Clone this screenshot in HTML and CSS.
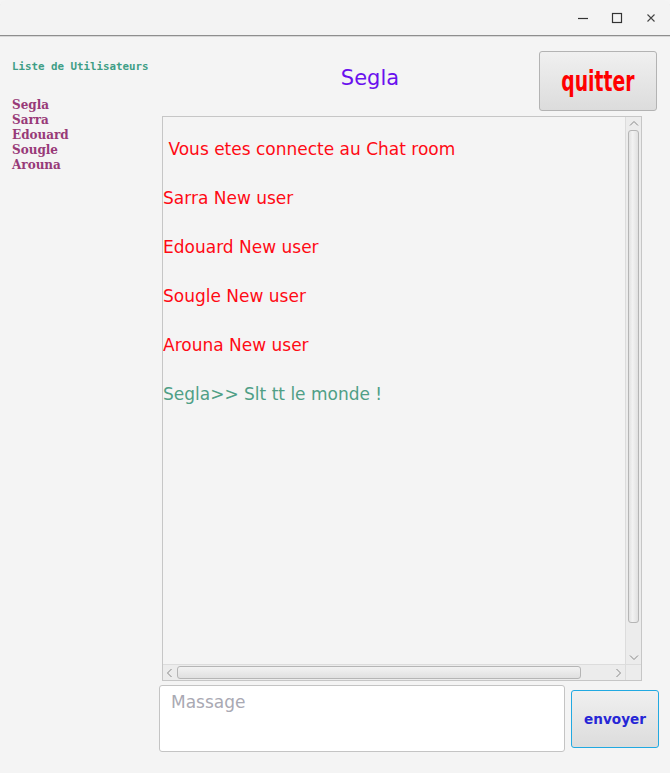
FILE: index.html
```html
<!DOCTYPE html>
<html lang="fr">
<head>
<meta charset="utf-8">
<title>Chat</title>
<link rel="stylesheet" href="styles.css">
</head>
<body>
<div class="window">
  <div class="titlebar">
    <div class="controls">
      <svg class="ctl" width="12" height="12" viewBox="0 0 12 12"><path d="M1 6.5h10" stroke="#333" stroke-width="1.2"/></svg>
      <svg class="ctl" width="12" height="12" viewBox="0 0 12 12"><rect x="1.5" y="1.5" width="9" height="9" fill="none" stroke="#333" stroke-width="1.2"/></svg>
      <svg class="ctl" width="12" height="12" viewBox="0 0 12 12"><path d="M2.5 2.5l7 7M9.5 2.5l-7 7" stroke="#444" stroke-width="1.1"/></svg>
    </div>
  </div>
  <div class="main">
    <aside class="sidebar">
      <div class="list-title">Liste de Utilisateurs</div>
      <ul class="users">
        <li>Segla</li>
        <li>Sarra</li>
        <li>Edouard</li>
        <li>Sougle</li>
        <li>Arouna</li>
      </ul>
    </aside>
    <section class="content">
      <header class="header">
        <div class="username">Segla</div>
        <button class="btn quit"><span class="quit-label">quitter</span></button>
      </header>
      <div class="chatbox">
        <div class="messages">
          <div class="msg sys"> Vous etes connecte au Chat room</div>
          <div class="msg sys">Sarra New user</div>
          <div class="msg sys">Edouard New user</div>
          <div class="msg sys">Sougle New user</div>
          <div class="msg sys">Arouna New user</div>
          <div class="msg own">Segla&gt;&gt; Slt tt le monde !</div>
        </div>
        <div class="vbar">
          <svg class="arrow" width="10" height="8" viewBox="0 0 10 8"><path d="M1 5.5L5 1.5l4 4" fill="none" stroke="#888" stroke-width="1"/></svg>
          <div class="vthumb"></div>
          <svg class="arrow" width="10" height="8" viewBox="0 0 10 8"><path d="M1 2.5L5 6.5l4-4" fill="none" stroke="#888" stroke-width="1"/></svg>
        </div>
        <div class="hbar">
          <svg class="arrow" width="8" height="10" viewBox="0 0 8 10"><path d="M5.5 1L1.5 5l4 4" fill="none" stroke="#888" stroke-width="1"/></svg>
          <div class="hthumb"></div>
          <svg class="arrow" width="8" height="10" viewBox="0 0 8 10"><path d="M2.5 1l4 4-4 4" fill="none" stroke="#888" stroke-width="1"/></svg>
        </div>
        <div class="corner"></div>
      </div>
      <div class="composer">
        <textarea class="input" placeholder="Massage"></textarea>
        <button class="btn send">envoyer</button>
      </div>
    </section>
  </div>
</div>
</body>
</html>
```
FILE: styles.css
```css
html, body {
  margin: 0;
  padding: 0;
  background: #f4f4f4;
}
.window {
  width: 670px;
  height: 773px;
  background: #f4f4f4;
  overflow: hidden;
  font-family: "DejaVu Sans", sans-serif;
}
.titlebar {
  height: 35px;
  background: #f3f3f3;
  border-bottom: 1px solid #8e8e8e;
  box-shadow: 0 1px 0 #d8d8d8;
  border-radius: 6px 6px 0 0;
  display: flex;
  justify-content: flex-end;
  align-items: center;
}
.controls {
  display: flex;
  align-items: center;
  gap: 22px;
  margin-right: 13px;
  margin-top: 1px;
}
.ctl { display: block; }
.main {
  display: flex;
  height: 736px;
  padding-top: 1px;
}
.sidebar {
  flex: none;
  width: 147px;
  padding: 23px 0 0 12px;
}
.list-title {
  font-family: "DejaVu Sans Mono", monospace;
  font-weight: bold;
  font-size: 10.8px;
  line-height: 13px;
  color: #3f9e86;
}
.users {
  list-style: none;
  margin: 25px 0 0;
  padding: 0;
  font-family: "DejaVu Serif", serif;
  font-weight: bold;
  font-size: 12px;
  line-height: 15px;
  color: #983a78;
}
.content {
  flex: 1;
  min-width: 0;
  display: flex;
  flex-direction: column;
  padding: 14px 11px 0 0;
}
.header {
  display: flex;
  align-items: center;
  height: 60px;
}
.username {
  flex: 1;
  text-align: center;
  padding-left: 42px;
  font-size: 21px;
  color: #6a10ee;
  margin-top: -7px;
}
.btn {
  border: 1px solid #b3b3b3;
  border-radius: 3px;
  background: linear-gradient(#f0f0f0, #dcdcdc);
  padding: 0;
  cursor: pointer;
}
.quit {
  width: 118px;
  height: 60px;
  margin-right: 2px;
  display: flex;
  align-items: center;
  justify-content: center;
}
.quit-label {
  display: inline-block;
  font-family: "DejaVu Sans Condensed", "DejaVu Sans", sans-serif;
  font-stretch: condensed;
  font-weight: bold;
  font-size: 29px;
  color: #ff0000;
  transform: scaleX(0.72);
  line-height: 30px;
}
.chatbox {
  margin: 5px 0 0 3px;
  width: 478px;
  height: 563px;
  border: 1px solid #c6c6c6;
  display: grid;
  grid-template-columns: 1fr 16px;
  grid-template-rows: 1fr 16px;
}
.messages {
  padding-top: 22px;
  font-size: 17px;
  line-height: 20px;
  overflow: hidden;
}
.msg {
  white-space: pre;
  margin-bottom: 29px;
}
.sys { color: #ff0a14; }
.own { color: #4f9f86; }
.vbar {
  background: #ececec;
  border-left: 1px solid #dcdcdc;
  display: flex;
  flex-direction: column;
  align-items: center;
  padding: 3px 0;
}
.hbar {
  background: #ececec;
  border-top: 1px solid #dcdcdc;
  display: flex;
  align-items: center;
  padding: 0 3px;
}
.corner {
  background: #ececec;
  border-top: 1px solid #dcdcdc;
  border-left: 1px solid #dcdcdc;
}
.arrow { display: block; flex: none; }
.vthumb {
  width: 9px;
  flex: 1;
  margin: 2px 0 30px;
  border: 1px solid #b5b5b5;
  border-radius: 3px;
  background: linear-gradient(90deg, #e2e2e2, #f2f2f2 40%, #e0e0e0);
}
.hthumb {
  height: 11px;
  width: 402px;
  margin-left: 3px;
  border: 1px solid #b5b5b5;
  border-radius: 3px;
  background: linear-gradient(#f2f2f2, #e0e0e0);
  margin-right: auto;
}
.composer {
  display: flex;
  align-items: center;
  margin-top: 4px;
}
.input {
  flex: none;
  width: 406px;
  height: 67px;
  box-sizing: border-box;
  border: 1px solid #c4c4c4;
  border-radius: 3px;
  background: #fff;
  resize: none;
  padding: 6px 11px;
  font-family: "DejaVu Sans", sans-serif;
  font-size: 17px;
  line-height: 20px;
  color: #333;
  outline: none;
}
.input::placeholder { color: #a9a9b3; }
.send {
  flex: none;
  margin-left: 6px;
  width: 88px;
  height: 58px;
  border: 1.5px solid #21a9e1;
  font-family: "DejaVu Sans", sans-serif;
  font-weight: bold;
  font-size: 13.6px;
  color: #2626d6;
}
```
